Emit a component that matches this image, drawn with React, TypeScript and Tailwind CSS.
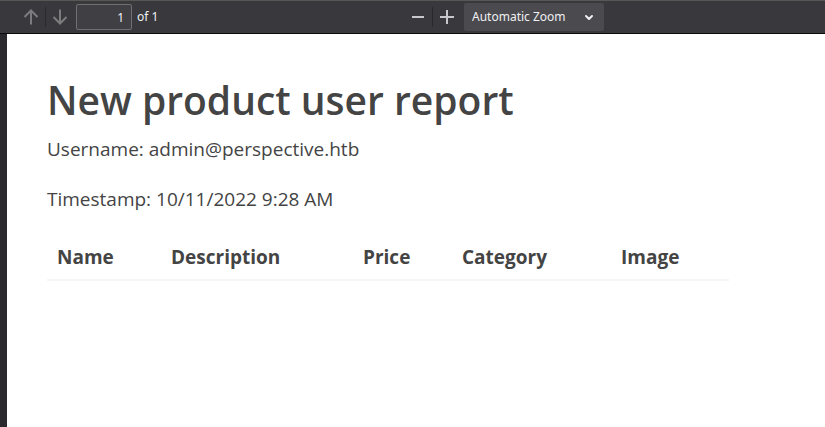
import { useState } from "react";

const columns = [
  { label: "Name", width: "w-[114px]" },
  { label: "Description", width: "w-[192px]" },
  { label: "Price", width: "w-[99px]" },
  { label: "Category", width: "w-[159px]" },
  { label: "Image", width: "w-[118px]" },
];

function Separator() {
  return <span className="h-5 w-px bg-[#29292c]" />;
}

function Icon({ d }: { d: string }) {
  return (
    <svg viewBox="0 0 16 16" className="size-4" fill="none" stroke="currentColor" strokeWidth="2" aria-hidden="true">
      <path d={d} />
    </svg>
  );
}

function ToolButton({ label, d, disabled }: { label: string; d: string; disabled?: boolean }) {
  return (
    <button
      type="button"
      aria-label={label}
      disabled={disabled}
      className="flex h-7 w-7 items-center justify-center text-[#c8c8ca] disabled:text-[#7c7c7f]"
    >
      <Icon d={d} />
    </button>
  );
}

function Toolbar() {
  const [page, setPage] = useState("1");
  return (
    <header className="grid h-[34px] grid-cols-[404fr_421fr] items-center border-t border-b border-t-[#575755] border-b-[#0c0c0d] bg-[#38383d] font-['Noto_Sans',sans-serif] text-xs text-[#f0f0f2]">
      <div className="flex items-center pl-[17px]">
        <ToolButton label="Previous page" d="M8 15.5V2M1.5 8L8 1.5L14.5 8" disabled />
        <Separator />
        <ToolButton label="Next page" d="M8 0.5V14M1.5 8L8 14.5L14.5 8" disabled />
        <input
          aria-label="Page"
          value={page}
          onChange={(e) => setPage(e.target.value)}
          className="ml-0.5 h-[26px] w-14 rounded-xs border border-[#706f72] bg-[#404044] px-[7px] text-right text-xs"
        />
        <span className="ml-[5px]">of 1</span>
      </div>
      <div className="flex items-center">
        <ToolButton label="Zoom out" d="M2 8H14" />
        <Separator />
        <ToolButton label="Zoom in" d="M1 8H15M8 1V15" />
        <div className="relative ml-[3px]">
          <select aria-label="Zoom" className="h-7 w-[140px] appearance-none rounded-xs bg-[#4a4a4f] pr-7 pl-2 text-xs">
            <option>Automatic Zoom</option>
          </select>
          <svg
            viewBox="0 0 10 8"
            className="pointer-events-none absolute top-[11px] right-[10px] h-2 w-[10px]"
            fill="none"
            stroke="currentColor"
            strokeWidth="2"
            strokeLinecap="round"
            strokeLinejoin="round"
            aria-hidden="true"
          >
            <path d="M2 2L5 5L8 2" />
          </svg>
        </div>
      </div>
    </header>
  );
}

export default function App() {
  return (
    <div className="flex min-h-screen flex-col bg-[#2a2a2e]">
      <Toolbar />
      <main className="ml-[7px] grow bg-white px-10 pt-10 font-['Open_Sans',sans-serif] text-[19px] text-[#444444]">
        <h1 className="text-[39px] leading-[52px] font-semibold">New product user report</h1>
        <p className="mt-2 leading-[30px]">Username: admin@perspective.htb</p>
        <p className="mt-5 leading-[30px]">Timestamp: 10/11/2022 9:28 AM</p>
        <table className="mt-5 w-full max-w-[682px] table-fixed border-collapse">
          <thead>
            <tr className="border-b-2 border-[#f5f5f5]">
              {columns.map((c) => (
                <th key={c.label} scope="col" className={`${c.width} px-[10px] pt-2 pb-[7px] text-left leading-[30px] font-bold`}>
                  {c.label}
                </th>
              ))}
            </tr>
          </thead>
        </table>
      </main>
    </div>
  );
}
